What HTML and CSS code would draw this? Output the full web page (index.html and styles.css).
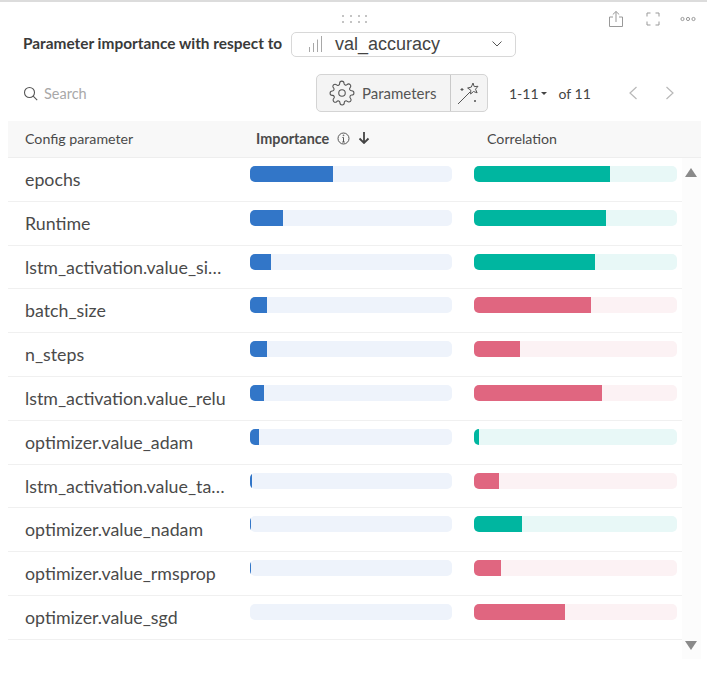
FILE: index.html
```html
<!DOCTYPE html>
<html lang="en">
<head>
    <meta charset="UTF-8">
    <title>Parameter importance</title>
    <link rel="stylesheet" href="styles.css">
</head>
<body>
<div class="panel">
    <div class="drag-row">
        <svg class="grip" width="26" height="10" viewBox="0 0 26 10" fill="#c4c4c4">
            <rect x="1" y="1" width="2" height="2"/><rect x="9" y="1" width="2" height="2"/><rect x="17" y="1" width="2" height="2"/><rect x="24" y="1" width="2" height="2"/>
            <rect x="1" y="7" width="2" height="2"/><rect x="9" y="7" width="2" height="2"/><rect x="17" y="7" width="2" height="2"/><rect x="24" y="7" width="2" height="2"/>
        </svg>
        <div class="panel-actions">
            <svg class="share" width="16" height="18" viewBox="0 0 16 18" fill="none" stroke="#999" stroke-width="1"><path d="M5 7H1.500v9.500h13V7H11"/><path d="M8 12V1.500M4.800 4.500 8 1.500l3.200 3"/></svg>
            <svg width="14" height="14" viewBox="0 0 14 14" fill="none" stroke="#999" stroke-width="1"><path d="M1 4.500V1h3.500M9.500 1H13v3.500M13 9.500V13H9.500M4.500 13H1V9.500"/></svg>
            <svg width="16" height="6" viewBox="0 0 16 6" fill="none" stroke="#999" stroke-width="1"><circle cx="2.500" cy="3" r="1.600"/><circle cx="8" cy="3" r="1.600"/><circle cx="13.500" cy="3" r="1.600"/></svg>
        </div>
    </div>

    <div class="title-row">
        <span class="title">Parameter importance with respect to</span>
        <div class="metric-select">
            <svg width="16" height="16" viewBox="0 0 16 16" fill="none" stroke="#a8a8a8" stroke-width="1"><path d="M1.500 16V11M5.500 16V7M9.500 16V3.500M13.500 16V0"/></svg>
            <span class="metric-name">val_accuracy</span>
            <svg class="chev" width="10" height="6" viewBox="0 0 10 6" fill="none" stroke="#555" stroke-width="1"><path d="M.5.5 5 5 9.500.5"/></svg>
        </div>
    </div>

    <div class="tool-row">
        <div class="search">
            <svg width="15" height="15" viewBox="0 0 15 15" fill="none" stroke="#555" stroke-width="1.100"><circle cx="6.500" cy="6.500" r="5"/><path d="m10.200 10.200 4 4"/></svg>
            <span>Search</span>
        </div>
        <div class="btn-group">
            <div class="btn-params">
                <svg width="26" height="26" viewBox="0 0 24 24" fill="none" stroke="#555" stroke-width="1"><circle cx="12" cy="12" r="3"/><path d="M19.400 15a1.650 1.650 0 0 0 .33 1.820l.06.06a2 2 0 1 1-2.830 2.830l-.06-.06a1.650 1.650 0 0 0-2.800 1.170V21a2 2 0 1 1-4 0v-.09a1.650 1.650 0 0 0-2.820-1.110l-.06.06a2 2 0 1 1-2.830-2.830l.06-.06a1.650 1.650 0 0 0-1.170-2.800H3a2 2 0 1 1 0-4h.09A1.650 1.650 0 0 0 4.200 7.350l-.06-.06a2 2 0 1 1 2.830-2.830l.06.06a1.650 1.650 0 0 0 2.800-1.170V3a2 2 0 1 1 4 0v.09a1.650 1.650 0 0 0 2.800 1.170l.06-.06a2 2 0 1 1 2.830 2.830l-.06.06a1.650 1.650 0 0 0 1.170 2.800H21a2 2 0 1 1 0 4h-.09a1.650 1.650 0 0 0-1.510 1.110z"/></svg>
                <span>Parameters</span>
            </div>
            <div class="btn-magic">
                <svg width="26" height="26" viewBox="0 0 26 26" fill="none" stroke="#555" stroke-width="1"><path d="M2 24 14 12"/><path d="m17 3 1.200 3.600 3.800-.3-2.500 2.900 1.600 3.600-3.600-1.300-2.900 2.500.2-3.800L11.600 8l3.700-.9z"/><path d="M6 8v3M4.500 9.500h3M19 20v2M18 21h2" stroke-width="1.100"/></svg>
            </div>
        </div>
        <div class="pager">
            <span class="page-range">1-11</span>
            <span class="caret"></span>
            <span class="page-of">of 11</span>
        </div>
        <div class="page-arrows">
            <svg width="10" height="14" viewBox="0 0 10 14" fill="none" stroke="#b8b8b8" stroke-width="1.200"><path d="M8.500 1 2 7l6.500 6"/></svg>
            <svg width="10" height="14" viewBox="0 0 10 14" fill="none" stroke="#b8b8b8" stroke-width="1.200"><path d="M1.500 1 8 7l-6.500 6"/></svg>
        </div>
    </div>

    <div class="table-head">
        <div class="col-name">Config parameter</div>
        <div class="col-imp">
            <b>Importance</b>
            <svg width="13" height="13" viewBox="0 0 13 13" fill="none" stroke="#555" stroke-width="1"><circle cx="6.500" cy="6.500" r="5.500"/><path d="M6.500 5.500V10M5.200 10h2.600M5.400 5.500h1.100"/><circle cx="6.500" cy="3.300" r=".4"/></svg>
            <svg class="sort" width="12" height="12" viewBox="0 0 12 12" fill="none" stroke="#444" stroke-width="1.800"><path d="M6 0v10.500M1.500 6.500 6 11l4.500-4.500"/></svg>
        </div>
        <div class="col-corr">Correlation</div>
    </div>

    <div class="table-body">
        <div class="rows">
            <div class="row"><div class="name">epochs</div><div class="bar imp"><i style="width:41%"></i></div><div class="bar pos"><i style="width:67%"></i></div></div>
            <div class="row"><div class="name">Runtime</div><div class="bar imp"><i style="width:16.300%"></i></div><div class="bar pos"><i style="width:65%"></i></div></div>
            <div class="row"><div class="name">lstm_activation.value_sigmoid</div><div class="bar imp"><i style="width:10.400%"></i></div><div class="bar pos"><i style="width:59.600%"></i></div></div>
            <div class="row"><div class="name">batch_size</div><div class="bar imp"><i style="width:8.400%"></i></div><div class="bar neg"><i style="width:57.600%"></i></div></div>
            <div class="row"><div class="name">n_steps</div><div class="bar imp"><i style="width:8.400%"></i></div><div class="bar neg"><i style="width:22.700%"></i></div></div>
            <div class="row"><div class="name">lstm_activation.value_relu</div><div class="bar imp"><i style="width:6.900%"></i></div><div class="bar neg"><i style="width:63%"></i></div></div>
            <div class="row"><div class="name">optimizer.value_adam</div><div class="bar imp"><i style="width:4.500%"></i></div><div class="bar pos"><i style="width:2.500%"></i></div></div>
            <div class="row"><div class="name">lstm_activation.value_tanh</div><div class="bar imp"><i style="width:1%"></i></div><div class="bar neg"><i style="width:12.300%"></i></div></div>
            <div class="row"><div class="name">optimizer.value_nadam</div><div class="bar imp"><i style="width:.5%"></i></div><div class="bar pos"><i style="width:23.600%"></i></div></div>
            <div class="row"><div class="name">optimizer.value_rmsprop</div><div class="bar imp"><i style="width:.5%"></i></div><div class="bar neg"><i style="width:13.300%"></i></div></div>
            <div class="row"><div class="name">optimizer.value_sgd</div><div class="bar imp"><i style="width:0"></i></div><div class="bar neg"><i style="width:44.800%"></i></div></div>
        </div>
        <div class="scrollbar">
            <span class="arrow-up"></span>
            <span class="arrow-down"></span>
        </div>
    </div>
</div>
</body>
</html>
```

FILE: styles.css
```css
* {
    box-sizing: border-box;
    margin: 0;
    padding: 0;
}

body {
    background: #fff;
    font-family: Lato, "Noto Sans", sans-serif;
    color: #444;
    width: 707px;
    height: 680px;
    overflow: hidden;
}

.panel {
    height: 680px;
    border-top: 2px solid #dcdcdc;
    padding: 0 6px 0 8px;
}

.drag-row {
    height: 29px;
    position: relative;
}

.grip {
    position: absolute;
    left: 333px;
    top: 12px;
}

.panel-actions {
    position: absolute;
    right: 5px;
    top: 8px;
    display: flex;
    align-items: center;
    gap: 20px;
}

.share {
    margin-right: 2px;
}

.title-row {
    display: flex;
    align-items: center;
    height: 26px;
    padding-left: 15px;
}

.title {
    font-size: 15.400px;
    font-weight: 700;
    color: #3a3a3a;
    width: 268px;
    white-space: nowrap;
    padding-bottom: 2px;
}

.metric-select {
    width: 225px;
    height: 25px;
    border: 1px solid #d8d8d8;
    border-radius: 5px;
    display: flex;
    align-items: center;
    padding: 0 13px 0 16px;
}

.metric-name {
    font-family: "Liberation Sans", Arial, sans-serif;
    font-size: 18px;
    color: #444;
    margin-left: 11px;
    flex: 1;
}

.tool-row {
    display: flex;
    align-items: center;
    height: 38px;
    margin-top: 17px;
    padding-left: 15px;
}

.search {
    width: 293px;
    display: flex;
    align-items: center;
    gap: 6px;
    font-size: 14.500px;
    color: #a8a8a8;
}

.btn-group {
    display: flex;
    width: 172px;
    height: 38px;
    background: #f4f4f4;
    border: 1px solid #d4d4d4;
    border-radius: 5px;
}

.btn-params {
    width: 134px;
    display: flex;
    align-items: center;
    gap: 7px;
    padding-left: 12px;
    border-right: 1px solid #c9c9c9;
    font-size: 15px;
    color: #555;
}

.btn-magic {
    flex: 1;
    display: flex;
    align-items: center;
    justify-content: center;
}

.pager {
    display: flex;
    align-items: center;
    margin-left: 21px;
    font-size: 14px;
    color: #444;
    width: 119px;
}

.caret {
    margin-left: 2px;
    border: 3px solid transparent;
    border-top: 3px solid #444;
    border-bottom: 0;
}

.page-of {
    margin-left: 12px;
}

.page-arrows {
    display: flex;
    gap: 27px;
}

.table-head {
    display: flex;
    align-items: center;
    height: 37px;
    margin-top: 9px;
    padding-bottom: 2px;
    background: #f8f8f8;
    border-bottom: 1px solid #eee;
    font-size: 14.200px;
    color: #4a4a4a;
}

.col-name {
    width: 248px;
    padding-left: 17px;
}

.col-imp {
    width: 231px;
    display: flex;
    align-items: center;
    gap: 8px;
}

.col-imp b {
    font-size: 14.400px;
    font-weight: 700;
}

.table-body {
    display: flex;
}

.rows {
    width: 674px;
}

.row {
    display: flex;
    align-items: flex-start;
    height: 43.800px;
    border-bottom: 1px solid #f0f0f0;
}

.name {
    width: 219px;
    padding: 11px 0 0 17px;
    margin-right: 23px;
    font-size: 17.800px;
    line-height: 20px;
    color: #4a4a4a;
    white-space: nowrap;
    overflow: hidden;
    text-overflow: ellipsis;
}

.bar {
    height: 16px;
    margin-top: 8px;
    border-radius: 5px;
    overflow: hidden;
}

.bar i {
    display: block;
    height: 100%;
}

.imp {
    width: 202px;
    margin-right: 22px;
    background: #eef3fb;
}

.imp i {
    background: #3276c8;
}

.pos {
    width: 203px;
    background: #e8f8f7;
}

.pos i {
    background: #00b6a0;
}

.neg {
    width: 203px;
    background: #fcf2f4;
}

.neg i {
    background: #e06680;
}

.scrollbar {
    width: 19px;
    height: 501px;
    background: #fcfcfc;
    position: relative;
}

.arrow-up,
.arrow-down {
    position: absolute;
    left: 3px;
    border-left: 6.500px solid transparent;
    border-right: 6.500px solid transparent;
}

.arrow-up {
    top: 10px;
    border-bottom: 9px solid #8a8a8a;
}

.arrow-down {
    bottom: 9px;
    border-top: 9px solid #8a8a8a;
}
```
